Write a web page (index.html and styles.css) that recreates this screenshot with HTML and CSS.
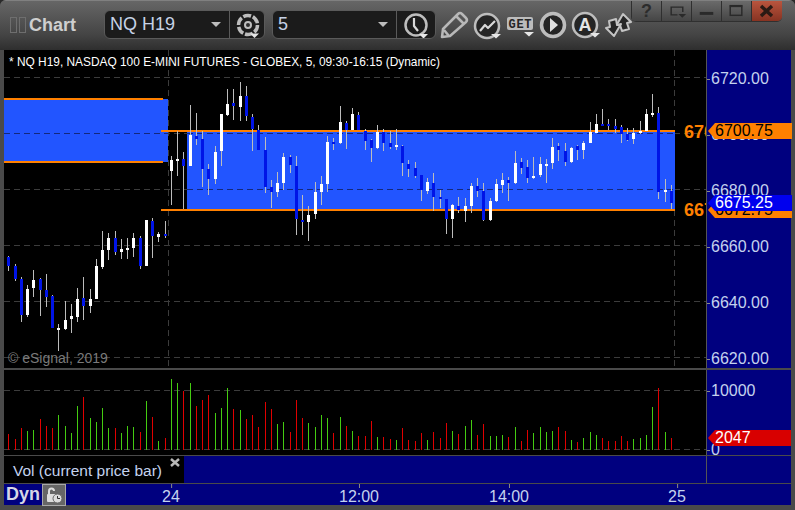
FILE: index.html
```html
<!DOCTYPE html>
<html lang="en">
<head>
<meta charset="utf-8">
<title>Chart</title>
<link rel="stylesheet" href="styles.css">
</head>
<body>
<div class="window">
  <header class="toolbar">
    <svg class="panel-grip" viewBox="0 0 16 16" aria-hidden="true"><rect x=".5" y=".5" width="6" height="15"/><rect x="9.5" y=".5" width="6" height="15"/></svg>
    <span class="app-title">Chart</span>
    <div class="select select-symbol">
      <span class="select-value">NQ H19</span><span class="caret"></span>
      <span class="select-icon">
        <svg viewBox="0 0 34 29" width="34" height="29" aria-hidden="true"><circle class="gear" cx="18" cy="15" r="9.5"/><circle class="gear-hub" cx="18" cy="15" r="3"/><path class="tri" d="M20 23.500h9l-4.500 4.500z"/></svg>
      </span>
    </div>
    <div class="select select-interval">
      <span class="select-value">5</span><span class="caret"></span>
      <span class="select-icon">
        <svg viewBox="0 0 38 29" width="38" height="29" aria-hidden="true"><circle class="ring" cx="19" cy="15" r="10.500"/><path class="hand" d="M17 8v8l4 5"/><path class="tri" d="M22 24h9l-4.500 4.500z"/></svg>
      </span>
    </div>
    <div class="tools">
      <svg viewBox="0 0 33 36" aria-hidden="true"><path class="pencil" d="M4 30l1-8L20 7q2-2 4 0l4 4q2 2 0 4L12 29z"/><path class="pencil" d="M18 9l8 8M6 23l5 6"/></svg>
      <svg viewBox="0 0 33 36" aria-hidden="true"><circle class="ring dark" cx="16" cy="19" r="12"/><path class="hand" d="M9 24l5-6 3 3 7-7"/><path class="tri" d="M20 27h10l-5 4.500z"/></svg>
      <svg viewBox="0 0 33 36" aria-hidden="true"><rect class="get-bg" x="3" y="10" width="26" height="13" rx="2"/><text class="get-text" x="4.500" y="21" textLength="23">GET</text><path class="tri" d="M20 25h10l-5 4.500z"/></svg>
      <svg viewBox="0 0 33 36" aria-hidden="true"><circle class="ring dark thick" cx="16" cy="18" r="11.500"/><path class="play" d="M13 11l8 7-8 7z"/></svg>
      <svg viewBox="0 0 33 36" aria-hidden="true"><circle class="ring dark" cx="15" cy="18" r="12"/><text class="a-text" x="15" y="24">A</text><path class="tri" d="M20 26h10l-5 4.500z"/></svg>
      <svg viewBox="0 0 33 36" aria-hidden="true"><path class="arrow" d="M20 7l8 8-4 1 2 6-7 2-2-6-4 1z"/><path class="arrow" d="M3 21l4-1-1-6 7-2 1 6 4-1-7 12z"/></svg>
    </div>
    <div class="win-buttons">
      <span class="win-btn help">?</span>
      <span class="win-btn"><svg viewBox="0 0 30 20" aria-hidden="true"><path class="win-line" d="M16 14H9.500V6h12v5"/><path class="win-fill" d="M17 13h8l-4 4z"/></svg></span>
      <span class="win-btn"><svg viewBox="0 0 30 20" aria-hidden="true"><rect class="win-fill" x="8" y="11" width="14" height="3"/></svg></span>
      <span class="win-btn"><svg viewBox="0 0 30 20" aria-hidden="true"><rect class="win-line" x="8.500" y="4.500" width="12" height="10"/><rect class="win-fill" x="8" y="4" width="13" height="2"/></svg></span>
      <span class="win-btn close"><svg viewBox="0 0 30 20" aria-hidden="true"><path class="win-x" d="M9 5l11 10M20 5L9 15"/></svg></span>
    </div>
  </header>

  <main class="panes">
    <section class="row row-price">
      <svg class="plot" width="702" height="318" viewBox="4 50 702 318">
        <line class="grid" x1="168.500" y1="50" x2="168.500" y2="368"/>
        <line class="grid" x1="674.500" y1="50" x2="674.500" y2="368"/>
        <line class="grid" x1="4" y1="77.500" x2="706" y2="77.500"/>
        <line class="grid" x1="4" y1="133.500" x2="706" y2="133.500"/>
        <line class="grid" x1="4" y1="189.500" x2="706" y2="189.500"/>
        <line class="grid" x1="4" y1="245.500" x2="706" y2="245.500"/>
        <line class="grid" x1="4" y1="301.500" x2="706" y2="301.500"/>
        <line class="grid" x1="4" y1="357.500" x2="706" y2="357.500"/>
        <rect class="zone" x="4" y="99" width="164" height="63"/>
        <rect class="zone" x="187" y="131" width="488" height="79"/>
        <line class="grid-on" x1="4" y1="133.500" x2="168" y2="133.500"/>
        <line class="grid-on" x1="187" y1="133.500" x2="675" y2="133.500"/>
        <line class="grid-on" x1="187" y1="189.500" x2="675" y2="189.500"/>
        <rect class="level" x="4" y="98" width="159" height="2"/>
        <rect class="level" x="4" y="161" width="159" height="2"/>
        <rect class="level" x="161" y="130" width="514" height="2"/>
        <rect class="level" x="161" y="209" width="514" height="2"/>
        <g id="candles"></g>
        <text class="study-title" x="9" y="66">* NQ H19, NASDAQ 100 E-MINI FUTURES - GLOBEX, 5, 09:30-16:15 (Dynamic)</text>
        <text class="copyright" x="8" y="363">© eSignal, 2019</text>
        <text class="level-text" x="684" y="138">6700.75</text>
        <text class="level-text" x="684" y="216">6672.75</text>
      </svg>
      <div class="axis axis-price">
        <div class="tick-row"><i></i>6720.00</div>
        <div class="tick-row"><i></i>6700.00</div>
        <div class="tick-row"><i></i>6680.00</div>
        <div class="tick-row"><i></i>6660.00</div>
        <div class="tick-row"><i></i>6640.00</div>
        <div class="tick-row"><i></i>6620.00</div>
        <span class="tag tag-orange tag-high">6700.75</span>
        <span class="tag tag-orange tag-low">6672.75</span>
        <span class="tag tag-blue tag-last">6675.25</span>
      </div>
    </section>
    <div class="pane-sep"></div>
    <section class="row row-volume">
      <svg class="plot" width="702" height="85" viewBox="4 370 702 85">
        <line class="grid" x1="4" y1="390.500" x2="706" y2="390.500"/>
        <line class="grid" x1="4" y1="449.500" x2="706" y2="449.500"/>
        <g id="volume"></g>
      </svg>
      <div class="axis axis-volume">
        <div class="tick-row"><i></i>10000</div>
        <div class="tick-row"><i></i>0</div>
        <span class="tag tag-red">2047</span>
      </div>
    </section>
    <section class="row row-label">
      <div class="study-label">
        <span>Vol (current price bar)</span>
        <svg class="label-close" viewBox="0 0 10 9" aria-hidden="true"><path d="M1 1l8 7M9 1L1 8"/></svg>
      </div>
      <div class="label-fill"></div>
      <div class="axis axis-empty"></div>
    </section>
    <section class="time-axis">
      <span class="dyn">Dyn</span>
      <span class="lock">
        <svg viewBox="0 0 22 20" width="22" height="20" aria-hidden="true"><path class="lock-bow" d="M6 9V6q0-2.500 2.500-2.500T11 6"/><rect class="lock-body" x="4" y="9" width="9" height="8" rx="1"/><circle class="lock-clock" cx="14.500" cy="13.500" r="4.500"/><path class="lock-hand" d="M14.500 11v2.500H17"/></svg>
      </span>
      <span class="time-label" style="left:171px">24</span>
      <span class="time-label" style="left:359px">12:00</span>
      <span class="time-label" style="left:509px">14:00</span>
      <span class="time-label" style="left:677px">25</span>
    </section>
  </main>
</div>
<script src="chart.js"></script>
</body>
</html>
```

FILE: styles.css
```css
* { box-sizing: border-box; }
html, body { margin: 0; padding: 0; }
body {
  width: 795px;
  height: 510px;
  overflow: hidden;
  background: #2a2a2a;
  font-family: "Liberation Sans", Arial, sans-serif;
}
.window {
  width: 795px;
  height: 510px;
  display: flex;
  flex-direction: column;
  background: #4a4a4a;
  border-radius: 6px 6px 0 0;
  overflow: hidden;
}

/* toolbar */
.toolbar {
  position: relative;
  height: 50px;
  flex: none;
  display: flex;
  align-items: flex-start;
  padding: 10px 0 0 10px;
  border-top: 1px solid #808080;
  background: linear-gradient(#666 0, #5a5a5a 12px, #444 34px, #2e2e2e 100%);
}
.panel-grip { width: 16px; height: 16px; margin-top: 6px; flex: none; }
.panel-grip rect { fill: none; stroke: #6e6e6e; }
.app-title {
  margin-left: 3px;
  width: 47px;
  font-size: 18px;
  font-weight: 700;
  line-height: 28px;
  color: #cfcfcf;
}
.select {
  height: 29px;
  margin-top: -1px;
  display: flex;
  align-items: center;
  background: #1b1b1b;
  border: 1px solid #5a5a5a;
  border-radius: 6px;
  flex: none;
  color: #c6d2e6;
  font-size: 18px;
}
.select-symbol { width: 161px; margin-left: 28px; }
.select-interval { width: 164px; margin-left: 7px; }
.select-value { flex: 1; padding-left: 5px; }
.caret {
  width: 0;
  height: 0;
  margin-right: 8px;
  border-left: 5px solid transparent;
  border-right: 5px solid transparent;
  border-top: 5px solid #bdbdbd;
}
.select-icon { height: 27px; border-left: 1px solid #5a5a5a; display: flex; overflow: hidden; }
.select-icon svg { margin-top: -1px; flex: none; }
.gear { fill: none; stroke: #bdbdbd; stroke-width: 3.500; stroke-dasharray: 8 1.900; }
.gear-hub { fill: #2a2a2a; stroke: #bdbdbd; stroke-width: 2; }
.tri { fill: #e6e6e6; }
.ring { fill: none; stroke: #bdbdbd; stroke-width: 2.500; }
.ring.dark { fill: #252525; }
.ring.thick { stroke-width: 3.500; }
.hand { fill: none; stroke: #d8d8d8; stroke-width: 2.200; stroke-linejoin: round; }
.tools { display: flex; margin: -4px 0 0 2px; flex: none; }
.tools svg { width: 33px; height: 36px; flex: none; overflow: visible; }
.pencil { fill: none; stroke: #b8b8b8; stroke-width: 2.500; stroke-linejoin: round; }
.get-bg { fill: #bcbcbc; }
.get-text { font: 700 12px "Liberation Mono", monospace; fill: #262626; }
.a-text { font: 700 18px "Liberation Sans", Arial, sans-serif; fill: #e4e4e4; text-anchor: middle; }
.play { fill: #e0e0e0; }
.arrow { fill: #262626; stroke: #c4c4c4; stroke-width: 2; stroke-linejoin: round; }
.win-buttons {
  position: absolute;
  top: 0;
  right: 13px;
  display: flex;
  height: 21px;
  border-radius: 0 0 5px 5px;
  overflow: hidden;
  border-bottom: 1px solid #303030;
}
.win-btn {
  width: 30px;
  display: flex;
  align-items: center;
  justify-content: center;
  background: linear-gradient(#6a6a6a, #454545);
  border-left: 1px solid #2f2f2f;
}
.win-btn svg { width: 30px; height: 20px; }
.win-btn.help { font-size: 18px; font-weight: 700; color: #2c2c2c; }
.win-btn.close { width: 31px; background: linear-gradient(#b9553e, #873322); }
.win-line { fill: none; stroke: #2a2a2a; stroke-width: 1.500; }
.win-fill { fill: #2a2a2a; }
.win-x { fill: none; stroke: #2b1a14; stroke-width: 3.500; }

/* panes */
.panes { margin: 0 4px; width: 787px; flex: none; }
.row { display: flex; }
.plot { display: block; flex: none; background: #000; }
.row-price { height: 318px; }
.row-volume { height: 85px; }
.pane-sep { height: 2px; background: #4a4a4a; }
.axis {
  position: relative;
  width: 85px;
  flex: none;
  background: #00007f;
  border-left: 1px solid #555;
  color: #c4d2ee;
  font-size: 16px;
  line-height: 16px;
}
.axis-price { padding-top: 21px; }
.tick-row { display: flex; align-items: center; height: 16px; margin-bottom: 40px; white-space: nowrap; }
.tick-row i { display: block; width: 3px; height: 1px; margin-right: 1px; background: #8a8a8a; }
.axis-volume { padding-top: 13px; overflow: hidden; }
.axis-volume .tick-row { margin-bottom: 43px; }
.tag {
  position: absolute;
  left: 1px;
  width: 84px;
  height: 16px;
  padding-left: 7px;
  line-height: 16px;
  clip-path: polygon(0 50%, 7px 0, 100% 0, 100% 100%, 7px 100%);
}
.tag-orange { background: #ff8000; color: #000; }
.tag-blue { background: #0000ee; color: #fff; }
.tag-red { background: #d80000; color: #fff; top: 60px; }
.tag-high { top: 73px; }
.tag-low { top: 152px; }
.tag-last { top: 145px; }

.zone { fill: #2255ff; }
.level { fill: #ff8000; }
.grid { stroke: #3c3c3c; stroke-width: 1; stroke-dasharray: 6 4; }
.grid-on { stroke: #14287c; stroke-width: 1; stroke-dasharray: 6 4; }
.study-title { font-size: 11.900px; fill: #fff; }
.copyright { font-size: 14px; fill: #7a7a7a; }
.level-text { font-size: 18px; font-weight: 700; fill: #ff8000; }

.row-label { height: 28px; border-top: 1px solid #4a4a4a; }
.study-label {
  width: 180px;
  flex: none;
  position: relative;
  background: #000;
  color: #c4d2ee;
  font-size: 15.500px;
  line-height: 29px;
  padding-left: 9px;
}
.label-close { position: absolute; left: 166px; top: 2px; width: 10px; height: 9px; }
.label-close path { fill: none; stroke: #b8b8b8; stroke-width: 2.500; }
.label-fill { flex: 1; background: #00007f; }
.axis-empty { border-left: 1px solid #555; }
.time-axis {
  position: relative;
  height: 22px;
  display: flex;
  align-items: center;
  background: #00007f;
  border-top: 1px solid #4a4a4a;
}
.dyn { width: 38px; padding-left: 2px; font-size: 18px; font-weight: 700; color: #d6d6e6; }
.lock {
  width: 24px;
  height: 22px;
  background: #666;
  border: 1px solid #a8a8a8;
  display: flex;
}
.lock-bow { fill: none; stroke: #dcdcdc; stroke-width: 2; }
.lock-body { fill: #dcdcdc; }
.lock-clock { fill: #dcdcdc; stroke: #666; }
.lock-hand { fill: none; stroke: #333; stroke-width: 1; }
.time-label {
  position: absolute;
  top: 4px;
  transform: translateX(-50%);
  margin-left: -4px;
  font-size: 16px;
  line-height: 18px;
  color: #c4d2ee;
}
.time-label::before {
  content: "";
  position: absolute;
  left: 50%;
  top: -4px;
  width: 1px;
  height: 4px;
  background: #8a8a8a;
}
#candles .wick { fill: #bcbcbc; }
#candles .up { fill: #fff; }
#candles .down { fill: #0014e6; }
#volume .r { fill: #e00000; }
#volume .g { fill: #44cc11; }
```

FILE: chart.js
```js
// [wickTop, wickBottom, bodyTop, bodyBottom, colour] at 3x pixel units, relative to y = 80
var CANDLES = [
  [528,572,531,557,0],[552,602,558,598,0],[590,725,598,705,0],[615,710,627,705,1],[570,650,600,624,1],
  [595,708,598,630,0],[582,680,630,651,0],[645,745,648,743,0],[732,812,744,750,1],[662,750,720,747,1],
  [672,758,708,717,1],[624,725,657,711,1],[590,720,654,678,0],[627,698,657,678,1],[537,657,558,657,1],
  [453,567,510,562,1],[460,540,474,510,1],[453,525,474,516,0],[477,537,507,516,1],[474,537,504,510,1],
  [460,531,474,504,1],[468,567,474,558,0],[420,558,420,558,1],[414,534,423,468,0],[456,486,462,471,1],
  [423,474,462,468,0],[228,375,240,273,1],[153,288,237,243,1],[216,388,237,258,0],[75,258,165,258,1],
  [99,195,168,177,0],[153,321,177,267,0],[252,345,267,297,0],[198,312,216,297,1],[102,258,102,213,1],
  [27,108,72,105,1],[27,120,69,78,0],[6,123,48,81,1],[18,123,48,108,0],[102,213,111,148,0],
  [135,210,150,210,0],[171,339,210,321,0],[300,384,321,336,0],[276,351,309,336,1],[219,330,231,309,1],
  [225,279,231,255,0],[228,465,258,417,0],[345,465,420,426,0],[378,483,405,426,1],[306,417,336,402,1],
  [288,375,312,336,1],[168,336,186,312,1],[174,210,186,192,0],[78,192,126,189,1],[123,207,129,150,0],
  [84,150,102,150,1],[96,150,105,150,0],[147,210,153,183,0],[177,246,180,204,0],[135,207,156,204,1],
  [147,213,156,189,0],[153,207,189,201,0],[147,210,195,201,1],[195,288,198,249,0],[240,291,252,267,0],
  [246,294,264,288,0],[285,363,285,330,0],[294,342,306,333,1],[279,393,309,351,0],[330,384,351,357,0],
  [357,462,357,417,0],[372,474,375,417,1],[351,399,378,390,0],[354,426,378,393,1],[309,399,318,378,1],
  [294,351,318,333,0],[309,423,333,420,0],[354,423,363,420,1],[297,366,312,363,1],[279,339,300,315,1],
  [291,363,300,309,0],[213,312,249,309,1],[234,282,246,264,0],[240,309,261,294,0],[231,297,288,294,1],
  [231,291,252,285,1],[237,309,252,258,1],[174,267,201,249,1],[189,243,198,210,0],[189,258,213,246,0],
  [201,249,204,246,1],[195,240,198,210,0],[183,237,189,210,1],[126,189,156,189,1],[102,159,132,159,1],
  [87,138,132,138,0],[117,150,132,138,0],[117,159,138,147,0],[135,189,141,162,0],[144,183,162,180,0],
  [144,192,159,177,1],[123,162,153,159,1],[87,153,102,153,1],[42,111,99,105,1],[81,357,99,336,0],
  [297,366,330,336,1],[315,387,333,369,0]
];
// volume bar tops at 3x pixel units relative to y = 360; r = down bar, g = up bar
var VOLUME = [
  "222r","237r","204r","213g","210g","177r","198r","204r","165g","198g","219g","138g","111r","174g","186g","144g",
  "204g","204r","219g","198g","201g","216r","123g","171r","243g","234r","57g","69g","93r","69g","138r","120r",
  "105r","159g","144g","84g","147r","150g","177r","165r","201r","126r","147r","192g","186g","216r","120r","174r",
  "189g","201g","165g","174g","219r","171g","198r","213g","228r","228r","183r","231g","231r","237r","240g",
  "204r","240r","243r","219r","240g","216r","234r","189r","213g","222r","198g","180g","225r","192r","228g","228g",
  "225g","231r","201g","243r","210r","219g","201g","216g","213g","201r","213r","240g","246r","234g","216g","225g",
  "234r","243r","243r","228r","243r","237g","234g","225g","141g","84r","216g","234r"
];
var NS = "http://www.w3.org/2000/svg";
function bar(parent, cls, x, y, w, h) {
  var r = document.createElementNS(NS, "rect");
  r.setAttribute("class", cls);
  r.setAttribute("x", x);
  r.setAttribute("y", y);
  r.setAttribute("width", w);
  r.setAttribute("height", Math.max(h, 1));
  parent.appendChild(r);
}
function barX(i) { return Math.floor(8.75 + 6.25 * i); }
var cg = document.getElementById("candles");
CANDLES.forEach(function (c, i) {
  var x = barX(i);
  bar(cg, "wick", x, 80 + Math.round(c[0] / 3), 1, Math.round((c[1] - c[0]) / 3));
  bar(cg, c[4] ? "up" : "down", x - 1, 80 + Math.round(c[2] / 3), 3, Math.round((c[3] - c[2]) / 3));
});
var vg = document.getElementById("volume");
VOLUME.forEach(function (v, i) {
  var top = 360 + Math.round(parseInt(v, 10) / 3);
  bar(vg, v.slice(-1), barX(i), top, 1, 450 - top);
});
```
